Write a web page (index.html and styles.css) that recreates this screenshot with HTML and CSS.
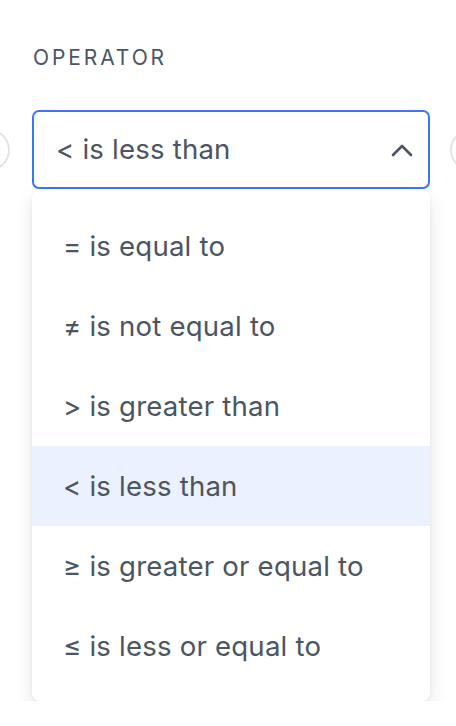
FILE: index.html
```html
<!DOCTYPE html>
<html>
<head>
<meta charset="utf-8">
<link rel="stylesheet" href="styles.css">
</head>
<body>
<div class="page">
  <div class="label">OPERATOR</div>
  <div class="row">
    <div class="circle circle-left"></div>
    <div class="field">
      <div class="select">
        <span class="value">&lt; is less than</span>
        <svg class="chev" width="22" height="14" viewBox="0 0 22 14"><path d="M2 12 L11 3 L20 12" fill="none" stroke="#4b5563" stroke-width="2.6" stroke-linecap="round" stroke-linejoin="round"/></svg>
      </div>
      <ul class="menu">
        <li class="item">= is equal to</li>
        <li class="item">≠ is not equal to</li>
        <li class="item">&gt; is greater than</li>
        <li class="item active">&lt; is less than</li>
        <li class="item">≥ is greater or equal to</li>
        <li class="item">≤ is less or equal to</li>
      </ul>
    </div>
    <div class="circle circle-right"></div>
  </div>
</div>
</body>
</html>
```

FILE: styles.css
```css
html, body {
  margin: 0;
  padding: 0;
  background: #ffffff;
  overflow: hidden;
}
body {
  width: 456px;
  height: 726px;
  font-family: Inter, "Noto Sans", sans-serif;
  color: #4b5563;
}
.page {
  padding-top: 45px;
}
.label {
  padding-left: 33px;
  font-size: 21px;
  letter-spacing: 2.9px;
  line-height: 26px;
  color: #4b5563;
  margin-bottom: 39px;
}
.row {
  display: flex;
  align-items: flex-start;
  width: 456px;
  overflow: hidden;
}
.circle {
  flex: none;
  width: 38px;
  height: 38px;
  border: 2px solid #e2e4e8;
  border-radius: 50%;
  margin-top: 19px;
}
.circle-left {
  margin-left: -32px;
  margin-right: 22px;
}
.circle-right {
  margin-left: 20px;
}
.field {
  flex: none;
  width: 398px;
}
.select {
  box-sizing: border-box;
  height: 79px;
  border: 2px solid #3b76f6;
  border-radius: 7px;
  display: flex;
  align-items: center;
  justify-content: space-between;
  padding: 0 15px 0 22px;
  background: #fff;
}
.value {
  font-size: 27.6px;
  letter-spacing: 0.2px;
  color: #4b5563;
  padding-bottom: 2px;
}
.chev {
  display: block;
}
.menu {
  list-style: none;
  margin: 1px 0 0 0;
  padding: 16px 0 15px 0;
  background: #fff;
  border-radius: 8px;
  box-shadow: 0 8px 18px rgba(0,0,0,0.10), 0 1px 4px rgba(0,0,0,0.06);
}
.item {
  height: 80px;
  display: flex;
  align-items: center;
  padding-left: 31px;
  font-size: 27.6px;
  letter-spacing: 0.2px;
  color: #4b5563;
}
.item.active {
  background: #ebf1fe;
}
```
